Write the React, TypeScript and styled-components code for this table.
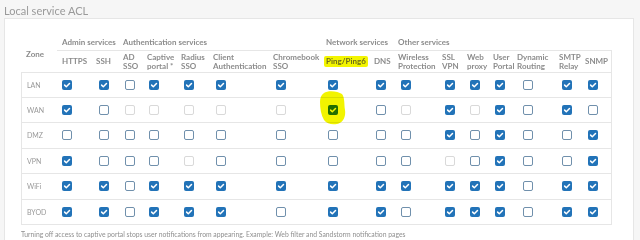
import React from "react";
import styled, { createGlobalStyle } from "styled-components";

const GlobalStyle = createGlobalStyle`
  html, body { margin: 0; padding: 0; }
  body {
    background: #f6f6f6;
    font-family: Lato, "Open Sans", sans-serif;
    width: 640px;
    height: 240px;
    overflow: hidden;
  }
`;

type State = "c" | "u" | "d";

const COLS = [
  { key: "https", label: ["HTTPS"], width: 34, pad: 5 },
  { key: "ssh", label: ["SSH"], width: 27, pad: 8 },
  { key: "ad", label: ["AD", "SSO"], width: 24, pad: 7 },
  { key: "captive", label: ["Captive", "portal *"], width: 34, pad: 7 },
  { key: "radius", label: ["Radius", "SSO"], width: 32, pad: 8 },
  { key: "client", label: ["Client", "Authentication"], width: 60, pad: 8 },
  { key: "chrome", label: ["Chromebook", "SSO"], width: 53, pad: 8 },
  { key: "ping", label: ["Ping/Ping6"], width: 48, pad: 7, highlight: true },
  { key: "dns", label: ["DNS"], width: 24, pad: 7 },
  { key: "wireless", label: ["Wireless", "Protection"], width: 44, pad: 8 },
  { key: "ssl", label: ["SSL", "VPN"], width: 25, pad: 8 },
  { key: "web", label: ["Web", "proxy"], width: 26, pad: 8 },
  { key: "user", label: ["User", "Portal"], width: 24, pad: 7 },
  { key: "dyn", label: ["Dynamic", "Routing"], width: 42, pad: 11 },
  { key: "smtp", label: ["SMTP", "Relay"], width: 26, pad: 8 },
  { key: "snmp", label: ["SNMP"], width: 32, pad: 8 },
];

const GROUPS = [
  { label: "Admin services", span: 2 },
  { label: "Authentication services", span: 5 },
  { label: "Network services", span: 2 },
  { label: "Other services", span: 7 },
];

const ROWS: { zone: string; states: string }[] = [
  { zone: "LAN", states: "ccuccccccccccucc" },
  { zone: "WAN", states: "cudddddcudcdcucu" },
  { zone: "DMZ", states: "uuuuuuuuuucucuuc" },
  { zone: "VPN", states: "cuuuduuuuuducuuc" },
  { zone: "WiFi", states: "ccuccccccccccucc" },
  { zone: "BYOD", states: "ccucccuccucccucc" },
];

const Page = styled.div`
  display: flex;
  flex-direction: column;
  height: 240px;
  overflow: hidden;
`;

const Title = styled.h1`
  margin: 0;
  padding: 4px 0 0 4px;
  height: 14px;
  font-size: 11px;
  line-height: 13px;
  font-weight: 400;
  color: #9a9a9a;
`;

const Panel = styled.section`
  flex: 1;
  margin-left: 4px;
  width: 630px;
  background: #ffffff;
  border: 1px solid #e6e6e6;
  border-bottom: none;
  box-sizing: border-box;
  padding: 15px 0 0 16px;
`;

const Table = styled.div<{ $cols: string }>`
  display: grid;
  grid-template-columns: ${(p) => p.$cols};
  grid-template-rows: 17px 21px repeat(6, 25.5px);
  width: 591px;
`;

const ZoneHead = styled.div`
  grid-row: 1 / 3;
  grid-column: 1;
  display: flex;
  align-items: center;
  padding: 2px 0 0 5px;
  font-size: 8px;
  font-weight: 700;
  color: #8c8c8c;
`;

const GroupHead = styled.div<{ $span: number }>`
  grid-column: span ${(p) => p.$span};
  display: flex;
  align-items: center;
  padding-left: 5px;
  font-size: 8px;
  font-weight: 700;
  color: #8c8c8c;
  border-bottom: 1px solid #e6e6e6;
  white-space: nowrap;
`;

const ColHead = styled.div<{ $last?: boolean }>`
  display: flex;
  flex-direction: column;
  justify-content: center;
  align-items: flex-start;
  padding-left: 5px;
  font-size: 8px;
  line-height: 9px;
  font-weight: 700;
  color: #8c8c8c;
  white-space: nowrap;
  border-right: ${(p) => (p.$last ? "1px solid #e6e6e6" : "none")};
`;

const Marker = styled.span`
  background: #f3f500;
  color: #6e6e1a;
  border-radius: 2px;
  padding: 1px 2px 1px 2px;
  margin-left: -2px;
`;

const RowLabel = styled.div<{ $first: boolean }>`
  display: flex;
  align-items: center;
  padding-left: 5px;
  font-size: 7px;
  color: #999999;
  border-left: 1px solid #e6e6e6;
  border-bottom: 1px solid #e6e6e6;
  border-top: ${(p) => (p.$first ? "1px solid #e6e6e6" : "none")};
`;

const Cell = styled.div<{ $first: boolean; $last: boolean; $pad: number }>`
  position: relative;
  display: flex;
  align-items: center;
  padding-left: ${(p) => p.$pad}px;
  border-bottom: 1px solid #e6e6e6;
  border-top: ${(p) => (p.$first ? "1px solid #e6e6e6" : "none")};
  border-right: ${(p) => (p.$last ? "1px solid #e6e6e6" : "none")};
`;

const Box = styled.span<{ $state: State }>`
  position: relative;
  z-index: 1;
  box-sizing: border-box;
  width: 10px;
  height: 10px;
  border-radius: 2px;
  display: inline-flex;
  align-items: center;
  justify-content: center;
  background: ${(p) => (p.$state === "c" ? "#2273b8" : "#ffffff")};
  border: ${(p) =>
    p.$state === "c"
      ? "none"
      : p.$state === "u"
      ? "1.3px solid #7090ac"
      : "1px solid #d9d9d9"};
`;

const Blob = styled.svg`
  position: absolute;
  left: -3px;
  top: -8px;
  z-index: 2;
  mix-blend-mode: multiply;
  pointer-events: none;
`;

const Note = styled.p`
  margin: 5px 0 0 0;
  font-size: 6.8px;
  color: #8f8f8f;
  white-space: nowrap;
`;

const Checkbox = ({ state }: { state: State }) => (
  <Box $state={state}>
    {state === "c" && (
      <svg width="10" height="10" viewBox="0 0 10 10">
        <path
          d="M2.6 5.1 L4.3 6.8 L7.5 3.5"
          stroke="#ffffff"
          strokeWidth="1.5"
          fill="none"
          strokeLinecap="round"
          strokeLinejoin="round"
        />
      </svg>
    )}
  </Box>
);

export default function App() {
  const cols = ["36px", ...COLS.map((c) => `${c.width}px`)].join(" ");
  return (
    <>
      <GlobalStyle />
      <Page>
        <Title>Local service ACL</Title>
        <Panel>
          <Table $cols={cols}>
            <ZoneHead>Zone</ZoneHead>
            {GROUPS.map((g) => (
              <GroupHead key={g.label} $span={g.span}>
                {g.label}
              </GroupHead>
            ))}
            {COLS.map((c, i) => (
              <ColHead key={c.key} $last={i === COLS.length - 1}>
                {c.highlight ? (
                  <Marker>{c.label[0]}</Marker>
                ) : (
                  c.label.map((l) => <span key={l}>{l}</span>)
                )}
              </ColHead>
            ))}
            {ROWS.map((r, ri) => (
              <React.Fragment key={r.zone}>
                <RowLabel $first={ri === 0}>{r.zone}</RowLabel>
                {COLS.map((c, ci) => (
                  <Cell
                    key={c.key}
                    $first={ri === 0}
                    $last={ci === COLS.length - 1}
                    $pad={c.pad}
                  >
                    <Checkbox state={r.states[ci] as State} />
                    {r.zone === "WAN" && c.key === "ping" && (
                      <Blob width="28" height="36" viewBox="0 0 28 36">
                        <path
                          d="M6 3 C10 0 20 1 24 4 C27 8 26 14 27 20 C28 27 25 33 19 34 C14 35 9 34 6 30 C3 25 2 18 2 12 C2 8 3 5 6 3 Z"
                          fill="#f2f400"
                        />
                      </Blob>
                    )}
                  </Cell>
                ))}
              </React.Fragment>
            ))}
          </Table>
          <Note>
            Turning off access to captive portal stops user notifications from
            appearing. Example: Web filter and Sandstorm notification pages
          </Note>
        </Panel>
      </Page>
    </>
  );
}
